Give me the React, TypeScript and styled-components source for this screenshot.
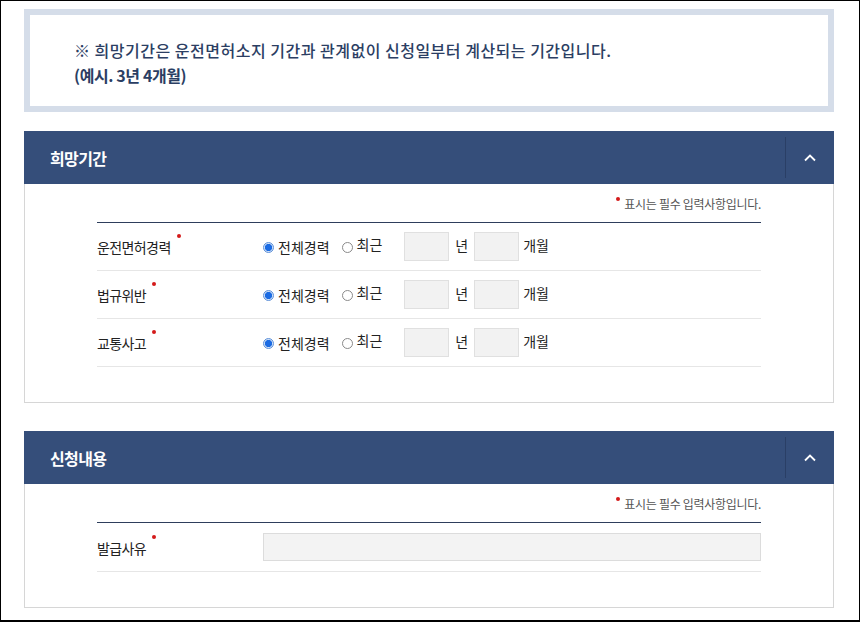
import React from "react";
import styled, { createGlobalStyle } from "styled-components";

const Global = createGlobalStyle`
  html, body { margin: 0; padding: 0; background: #fff; }
  body { font-family: "Noto Sans CJK KR", "Noto Sans", sans-serif; }
  * { box-sizing: border-box; }
`;

const Frame = styled.div`
  width: 860px;
  height: 622px;
  border: 1px solid #000;
  border-bottom-width: 2px;
  padding: 8px 25px 0 23px;
  background: #fff;
  overflow: hidden;
`;

const Notice = styled.div`
  height: 103px;
  border: 6px solid #d5dde9;
  padding: 23px 44px 0;
  color: #2b3e63;
  font-size: 16px;
  line-height: 25px;
`;

const NoticeLine = styled.p<{ $bold?: boolean }>`
  margin: 0;
  font-weight: ${(p) => (p.$bold ? 700 : 500)};
  letter-spacing: ${(p) => (p.$bold ? "-0.4px" : "0.5px")};
`;

const Section = styled.section<{ $gap: number }>`
  margin-top: ${(p) => p.$gap}px;
`;

const Header = styled.div`
  height: 53px;
  background: #354e7a;
  display: flex;
  align-items: center;
  padding-left: 26px;
`;

const Title = styled.h2`
  flex: 1;
  margin: 0;
  color: #fff;
  font-size: 16px;
  font-weight: 700;
  letter-spacing: -0.6px;
`;

const Toggle = styled.button`
  width: 49px;
  height: 41px;
  border: none;
  border-left: 1px solid #2a3f66;
  background: transparent;
  display: flex;
  align-items: center;
  justify-content: center;
  padding: 0;
  cursor: pointer;
`;

const Body = styled.div<{ $bottom: number }>`
  border: 1px solid #d6d6d6;
  border-top: none;
  padding: 10px 72px ${(p) => p.$bottom}px;
`;

const Required = styled.div`
  display: flex;
  justify-content: flex-end;
  align-items: center;
  height: 18px;
  margin-bottom: 10px;
  font-size: 12px;
  color: #555;
  letter-spacing: -0.3px;
`;

const Dot = styled.span<{ $top: number; $left: number }>`
  display: inline-block;
  width: 4px;
  height: 4px;
  border-radius: 50%;
  background: #d41a1a;
  position: relative;
  top: ${(p) => p.$top}px;
  margin-left: ${(p) => p.$left}px;
  align-self: center;
`;

const NoteText = styled.span`
  margin-left: 4px;
`;

const Table = styled.div`
  border-top: 1px solid #2e3e5c;
`;

const Row = styled.div<{ $h: number }>`
  display: grid;
  grid-template-columns: 166px 1fr;
  align-items: center;
  height: ${(p) => p.$h}px;
  border-bottom: 1px solid #e6e6e6;
`;

const Label = styled.div`
  display: flex;
  align-items: center;
  font-size: 14px;
  color: #222;
  letter-spacing: -0.6px;
  padding-top: 1px;
`;

const Field = styled.div`
  display: flex;
  align-items: center;
  font-size: 14px;
  color: #222;
`;

const RadioLabel = styled.label<{ $gapAfter: number; $lift: number }>`
  display: flex;
  align-items: center;
  gap: 4px;
  margin-right: ${(p) => p.$gapAfter}px;
  span { position: relative; top: ${(p) => -p.$lift}px; }
`;

const Radio = styled.input.attrs({ type: "radio" })`
  appearance: none;
  margin: 0;
  width: 11px;
  height: 11px;
  border-radius: 50%;
  border: 1px solid #8a8a8a;
  background: #fff;
  position: relative;
  top: 1px;
  &:checked {
    border-color: #5c8fd8;
    background: radial-gradient(circle, #1b6be3 0 3.2px, #cfe0f7 4px);
  }
`;

const Box = styled.input`
  width: 45px;
  height: 29px;
  margin: 0;
  border: 1px solid #e0e0e0;
  background: #f2f2f2;
  font-size: 13px;
`;

const Unit = styled.span<{ $ml: number; $mr: number }>`
  margin-left: ${(p) => p.$ml}px;
  margin-right: ${(p) => p.$mr}px;
  position: relative;
  top: -2px;
`;

const Wide = styled.input`
  width: 498px;
  height: 28px;
  margin: 0;
  border: 1px solid #dcdcdc;
  background: #f3f3f3;
`;

const Chevron = () => (
  <svg width="14" height="9" viewBox="0 0 14 9" fill="none">
    <path d="M2 7.5 L7 2.5 L12 7.5" stroke="#fff" strokeWidth="1.8" />
  </svg>
);

const RequiredNote = () => (
  <Required>
    <Dot $top={-4} $left={0} />
    <NoteText>표시는 필수 입력사항입니다.</NoteText>
  </Required>
);

const periodRows = ["운전면허경력", "법규위반", "교통사고"];

export default function App() {
  return (
    <>
      <Global />
      <Frame>
        <Notice>
          <NoticeLine>※ 희망기간은 운전면허소지 기간과 관계없이 신청일부터 계산되는 기간입니다.</NoticeLine>
          <NoticeLine $bold>(예시. 3년 4개월)</NoticeLine>
        </Notice>

        <Section $gap={19}>
          <Header>
            <Title>희망기간</Title>
            <Toggle aria-label="접기">
              <Chevron />
            </Toggle>
          </Header>
          <Body $bottom={35}>
            <RequiredNote />
            <Table>
              {periodRows.map((name) => (
                <Row key={name} $h={48}>
                  <Label>
                    {name}
                    <Dot $top={-11} $left={6} />
                  </Label>
                  <Field>
                    <RadioLabel $gapAfter={12} $lift={0}>
                      <Radio name={name} defaultChecked />
                      <span>전체경력</span>
                    </RadioLabel>
                    <RadioLabel $gapAfter={22} $lift={3}>
                      <Radio name={name} />
                      <span>최근</span>
                    </RadioLabel>
                    <Box />
                    <Unit $ml={6} $mr={6}>년</Unit>
                    <Box />
                    <Unit $ml={4} $mr={0}>개월</Unit>
                  </Field>
                </Row>
              ))}
            </Table>
          </Body>
        </Section>

        <Section $gap={28}>
          <Header>
            <Title>신청내용</Title>
            <Toggle aria-label="접기">
              <Chevron />
            </Toggle>
          </Header>
          <Body $bottom={35}>
            <RequiredNote />
            <Table>
              <Row $h={49}>
                <Label>
                  발급사유
                  <Dot $top={-11} $left={6} />
                </Label>
                <Field>
                  <Wide />
                </Field>
              </Row>
            </Table>
          </Body>
        </Section>
      </Frame>
    </>
  );
}
